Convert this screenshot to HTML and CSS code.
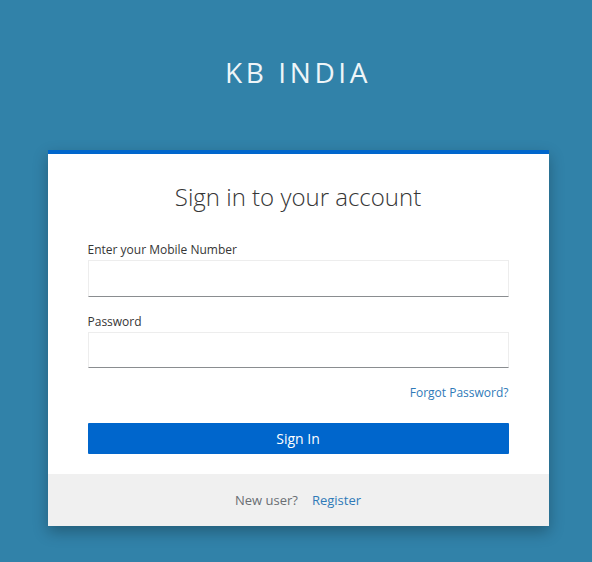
FILE: index.html
```html
<!DOCTYPE html>
<html lang="en">
<head>
<meta charset="utf-8">
<title>Sign in to KB INDIA</title>
<link rel="stylesheet" href="styles.css">
</head>
<body>
<header class="brand">KB INDIA</header>
<main class="card">
  <div class="card-body">
    <h1 class="title">Sign in to your account</h1>
    <form class="form">
      <div class="field">
        <label class="label" for="mobile">Enter your Mobile Number</label>
        <input class="input" id="mobile" type="text">
      </div>
      <div class="field">
        <label class="label" for="password">Password</label>
        <input class="input" id="password" type="password">
      </div>
      <div class="options">
        <a class="link" href="#">Forgot Password?</a>
      </div>
      <button class="btn" type="button">Sign In</button>
    </form>
  </div>
  <div class="card-footer">
    <span class="muted">New user?</span>
    <a class="link" href="#">Register</a>
  </div>
</main>
</body>
</html>
```

FILE: styles.css
```css
html, body {
  margin: 0;
  padding: 0;
}
body {
  background: #3182a9;
  font-family: "Open Sans", "Noto Sans", sans-serif;
  min-height: 562px;
  padding-left: 4px;
}
.brand {
  padding-top: 55px;
  margin-bottom: 61px;
  text-align: center;
  font-size: 28px;
  line-height: 34px;
  letter-spacing: 3.6px;
  color: #eef5f8;
  font-weight: 400;
}
.card {
  width: 501px;
  margin: 0 auto;
  background: #fff;
  border-top: 4px solid #0066cc;
  box-shadow: 0 6px 14px rgba(0, 0, 0, 0.28);
}
.card-body {
  padding: 28px 40px 20px;
}
.title {
  margin: 0 0 29px;
  text-align: center;
  font-size: 24px;
  line-height: 30px;
  font-weight: 300;
  color: #363636;
}
.form {
  display: flex;
  flex-direction: column;
}
.field {
  display: flex;
  flex-direction: column;
  margin-bottom: 16px;
}
.field + .field {
  margin-bottom: 15px;
}
.label {
  font-size: 12px;
  line-height: 18px;
  color: #363636;
  margin-bottom: 1px;
}
.input {
  box-sizing: border-box;
  height: 37px;
  border: 1px solid #ededed;
  border-bottom-color: #8a8d90;
  background: #fff;
  margin: 0;
  padding: 0 8px;
  font: inherit;
}
.field + .field .input {
  height: 36px;
}
.options {
  display: flex;
  justify-content: flex-end;
  font-size: 12px;
  line-height: 18px;
  margin-top: 1px;
  margin-bottom: 21px;
}
.link {
  color: #2f7ab8;
  text-decoration: none;
}
.btn {
  height: 31px;
  border: 0;
  border-radius: 1px;
  background: #0066cc;
  color: #fff;
  font-family: inherit;
  font-size: 14px;
  padding: 0;
}
.card-footer {
  background: #f0f0f0;
  height: 52px;
  display: flex;
  align-items: center;
  justify-content: center;
  gap: 14px;
  font-size: 13px;
  padding-bottom: 1px;
  box-sizing: border-box;
}
.muted {
  color: #6a6e73;
}
```
